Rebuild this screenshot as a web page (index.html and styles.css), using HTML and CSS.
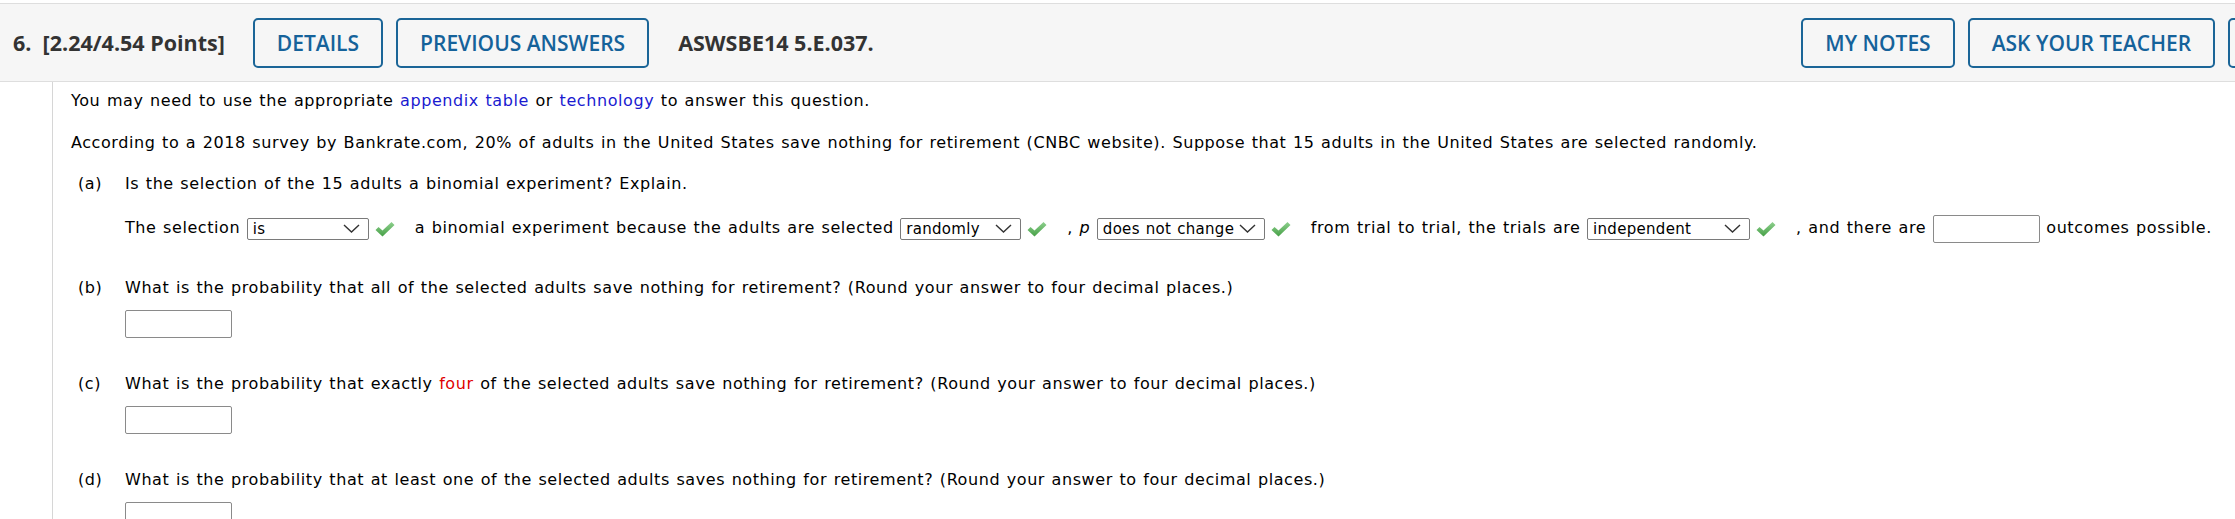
FILE: index.html
```html
<!DOCTYPE html>
<html>
<head>
<meta charset="utf-8">
<link rel="stylesheet" href="styles.css">
</head>
<body>
<div class="page">
  <div class="header">
    <div class="hgroup">
      <span class="qnum">6.&nbsp; [2.24/4.54 Points]</span>
      <button class="hbtn">DETAILS</button>
      <button class="hbtn">PREVIOUS ANSWERS</button>
      <span class="qcode">ASWSBE14 5.E.037.</span>
    </div>
    <div class="hgroup">
      <button class="hbtn">MY NOTES</button>
      <button class="hbtn">ASK YOUR TEACHER</button>
      <button class="hbtn hbtn-last">PRACTICE ANOTHER</button>
    </div>
  </div>
  <div class="content">
    <p class="para">You may need to use the appropriate <a class="link">appendix table</a> or <a class="link">technology</a> to answer this question.</p>
    <p class="para">According to a 2018 survey by Bankrate.com, 20% of adults in the United States save nothing for retirement (CNBC website). Suppose that 15 adults in the United States are selected randomly.</p>

    <div class="part part-a">
      <span class="plabel">(a)</span>
      <div class="pbody">
        <div class="ptext">Is the selection of the 15 adults a binomial experiment? Explain.</div>
        <div class="row">The selection <span class="dd dd-is"><span class="dd-val">is</span><svg class="chev" viewBox="0 0 17 9"><path d="M1 1 L8.5 8 L16 1" fill="none" stroke="#333" stroke-width="1.4"/></svg></span><svg class="check" viewBox="0 0 20 16"><defs><linearGradient id="g1" x1="0" y1="0" x2="0" y2="1"><stop offset="0" stop-color="#8ed08e"/><stop offset="1" stop-color="#46a046"/></linearGradient></defs><path d="M0.5 9 L3.5 6 L7.5 9.5 L16.5 1 L19.5 4 L7.5 15.5 Z" fill="url(#g1)"/></svg>a binomial experiment because the adults are selected <span class="dd dd-rand"><span class="dd-val">randomly</span><svg class="chev" viewBox="0 0 17 9"><path d="M1 1 L8.5 8 L16 1" fill="none" stroke="#333" stroke-width="1.4"/></svg></span><svg class="check" viewBox="0 0 20 16"><path d="M0.5 9 L3.5 6 L7.5 9.5 L16.5 1 L19.5 4 L7.5 15.5 Z" fill="url(#g1)"/></svg>, <i>p</i> <span class="dd dd-change"><span class="dd-val">does not change</span><svg class="chev" viewBox="0 0 17 9"><path d="M1 1 L8.5 8 L16 1" fill="none" stroke="#333" stroke-width="1.4"/></svg></span><svg class="check" viewBox="0 0 20 16"><path d="M0.5 9 L3.5 6 L7.5 9.5 L16.5 1 L19.5 4 L7.5 15.5 Z" fill="url(#g1)"/></svg>from trial to trial, the trials are <span class="dd dd-indep"><span class="dd-val">independent</span><svg class="chev" viewBox="0 0 17 9"><path d="M1 1 L8.5 8 L16 1" fill="none" stroke="#333" stroke-width="1.4"/></svg></span><svg class="check" viewBox="0 0 20 16"><path d="M0.5 9 L3.5 6 L7.5 9.5 L16.5 1 L19.5 4 L7.5 15.5 Z" fill="url(#g1)"/></svg>, and there are <input class="ans ans-inline" type="text"> outcomes possible.</div>
      </div>
    </div>

    <div class="part">
      <span class="plabel">(b)</span>
      <div class="pbody">
        <div class="ptext">What is the probability that all of the selected adults save nothing for retirement? (Round your answer to four decimal places.)</div>
        <input class="ans ans-block" type="text">
      </div>
    </div>

    <div class="part">
      <span class="plabel">(c)</span>
      <div class="pbody">
        <div class="ptext">What is the probability that exactly <span class="red">four</span> of the selected adults save nothing for retirement? (Round your answer to four decimal places.)</div>
        <input class="ans ans-block" type="text">
      </div>
    </div>

    <div class="part">
      <span class="plabel">(d)</span>
      <div class="pbody">
        <div class="ptext">What is the probability that at least one of the selected adults saves nothing for retirement? (Round your answer to four decimal places.)</div>
        <input class="ans ans-block" type="text">
      </div>
    </div>
  </div>
</div>
</body>
</html>
```
FILE: styles.css
```css
html, body {
  margin: 0;
  padding: 0;
  background: #fff;
  overflow: hidden;
}

.page {
  overflow: hidden;
  font-family: "DejaVu Sans", Verdana, sans-serif;
  color: #000;
}

.header {
  margin-top: 3px;
  margin-right: -256px;
  height: 77px;
  border-top: 1px solid #dedede;
  border-bottom: 1px solid #dedede;
  background: #f6f6f6;
  display: flex;
  align-items: center;
  justify-content: space-between;
  padding: 0 13px;
  font-family: "Open Sans", sans-serif;
}

.hgroup {
  display: flex;
  align-items: center;
}

.qnum {
  font-weight: 700;
  font-size: 21.5px;
  color: #333;
  margin-right: 28px;
  white-space: nowrap;
}

.qcode {
  font-weight: 700;
  font-size: 21.5px;
  color: #333;
  margin-left: 16px;
  white-space: nowrap;
}

.hbtn {
  font-family: "Open Sans", sans-serif;
  font-weight: 600;
  font-size: 21px;
  color: #15629a;
  background: transparent;
  border: 2px solid #1b6597;
  border-radius: 5px;
  height: 50px;
  padding: 0 22px;
  margin: 0 13px 0 0;
  white-space: nowrap;
}

.hbtn-last {
  margin-right: 0;
}

.content {
  margin-left: 52px;
  border-left: 1px solid #d6d6d6;
  padding: 9px 0 40px 18px;
  font-size: 16px;
  line-height: 20px;
  letter-spacing: 0.58px;
  word-spacing: 0.9px;
}

.para {
  margin: 0 0 22px;
}

.link {
  color: #1a1ad0;
  text-decoration: none;
}

.red {
  color: #e00000;
}

.part {
  display: flex;
  padding-left: 7px;
}

.part + .part {
  margin-top: 36px;
}

.part-a {
  margin-top: -1px;
}

.plabel {
  width: 47px;
  flex: none;
}

.pbody {
  flex: 1;
}

.row {
  margin-top: 20px;
  line-height: 28px;
  height: 28px;
  white-space: nowrap;
}

.dd {
  display: inline-flex;
  align-items: center;
  justify-content: space-between;
  box-sizing: border-box;
  height: 22px;
  border: 1px solid #7a7a7a;
  border-radius: 2px;
  padding: 0 8px 0 5px;
  vertical-align: middle;
  font-size: 15px;
  line-height: 20px;
  letter-spacing: 0.3px;
  background: #fff;
}

.dd-is { width: 122px; }
.dd-rand { width: 121px; }
.dd-change { width: 168px; }
.dd-indep { width: 163px; }

.chev {
  width: 17px;
  height: 9px;
  flex: none;
}

.check {
  width: 20px;
  height: 16px;
  vertical-align: middle;
  margin: 0 20px 0 6px;
}

.ans {
  box-sizing: border-box;
  width: 107px;
  height: 28px;
  border: 1px solid #8a8a8a;
  border-radius: 2px;
  padding: 0;
  margin: 0;
  background: #fff;
  font-size: 16px;
}

.ans-inline {
  vertical-align: middle;
}

.ans-block {
  display: block;
  margin-top: 12px;
}
```
